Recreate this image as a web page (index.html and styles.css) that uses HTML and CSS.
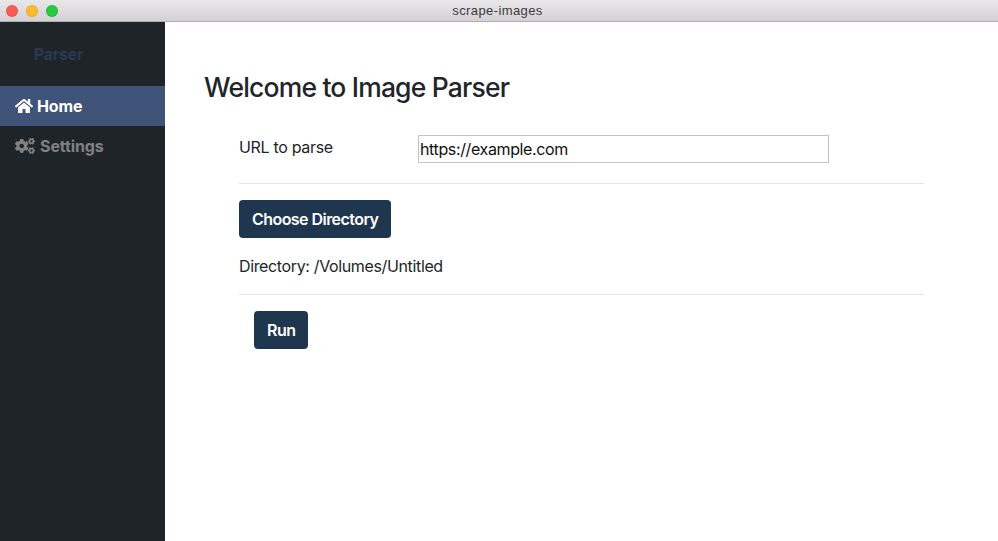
FILE: index.html
```html
<!DOCTYPE html>
<html lang="en">
<head>
<meta charset="utf-8">
<title>scrape-images</title>
<link rel="stylesheet" href="styles.css">
</head>
<body>
<div class="window">
  <header class="titlebar">
    <div class="lights">
      <span class="light light-close"></span>
      <span class="light light-min"></span>
      <span class="light light-max"></span>
    </div>
    <div class="title">scrape-images</div>
  </header>
  <div class="app">
    <aside class="sidebar">
      <div class="brand">Parser</div>
      <nav class="nav">
        <a class="nav-item active">
          <svg class="icon icon-home" viewBox="0 0 576 512"><path fill="currentColor" d="M280.37 148.26L96 300.11V464a16 16 0 0 0 16 16l112.06-.29a16 16 0 0 0 15.92-16V368a16 16 0 0 1 16-16h64a16 16 0 0 1 16 16v95.64a16 16 0 0 0 16 16.05L464 480a16 16 0 0 0 16-16V300L295.67 148.26a12.19 12.19 0 0 0-15.3 0zM571.6 251.47L488 182.56V44.05a12 12 0 0 0-12-12h-56a12 12 0 0 0-12 12v72.61L318.47 43a48 48 0 0 0-61 0L4.34 251.47a12 12 0 0 0-1.6 16.9l25.5 31A12 12 0 0 0 45.15 301l235.22-193.74a12.19 12.19 0 0 1 15.3 0L530.9 301a12 12 0 0 0 16.9-1.6l25.5-31a12 12 0 0 0-1.7-16.93z"/></svg>
          <span>Home</span>
        </a>
        <a class="nav-item">
          <svg class="icon icon-cogs" viewBox="0 0 640 512"><path fill="currentColor" d="M512.1 191l-8.2 14.3c-3 5.3-9.4 7.5-15.1 5.4-11.8-4.4-22.6-10.7-32.1-18.6-4.6-3.8-5.8-10.5-2.8-15.7l8.2-14.3c-6.9-8-12.3-17.3-15.9-27.4h-16.5c-6 0-11.2-4.3-12.2-10.3-2-12-2.1-24.6 0-37.1 1-6 6.2-10.4 12.2-10.4h16.5c3.6-10.1 9-19.4 15.9-27.4l-8.2-14.3c-3-5.2-1.9-11.9 2.8-15.7 9.5-7.9 20.4-14.2 32.1-18.6 5.7-2.1 12.1.1 15.1 5.4l8.2 14.3c10.5-1.9 21.2-1.9 31.7 0L552 6.3c3-5.3 9.4-7.5 15.1-5.4 11.8 4.4 22.6 10.7 32.1 18.6 4.6 3.8 5.8 10.5 2.8 15.7l-8.2 14.3c6.9 8 12.3 17.3 15.9 27.4h16.5c6 0 11.2 4.3 12.2 10.3 2 12 2.1 24.6 0 37.1-1 6-6.2 10.4-12.2 10.4h-16.5c-3.6 10.1-9 19.4-15.9 27.4l8.2 14.3c3 5.2 1.9 11.9-2.8 15.7-9.5 7.9-20.4 14.2-32.1 18.6-5.7 2.1-12.1-.1-15.1-5.4l-8.2-14.3c-10.4 1.9-21.2 1.9-31.7 0zm-10.5-58.8c38.5 29.6 82.4-14.3 52.8-52.8-38.5-29.7-82.4 14.3-52.8 52.8zM386.3 286.1l33.7 16.8c10.1 5.8 14.5 18.1 10.5 29.1-8.9 24.2-26.4 46.4-42.6 65.8-7.4 8.9-20.2 11.1-30.3 5.3l-29.1-16.8c-16 13.7-34.6 24.6-54.9 31.7v33.6c0 11.6-8.3 21.6-19.7 23.6-24.6 4.2-50.4 4.4-75.9 0-11.5-2-20-11.9-20-23.6V418c-20.3-7.2-38.9-18-54.9-31.7L74 403c-10 5.8-22.9 3.6-30.3-5.3-16.2-19.4-33.3-41.6-42.2-65.7-4-10.9.4-23.2 10.5-29.1l33.3-16.8c-3.9-20.9-3.9-42.4 0-63.4L12 205.8c-10.1-5.8-14.6-18.1-10.5-29 8.9-24.2 26-46.4 42.2-65.8 7.4-8.9 20.2-11.1 30.3-5.3l29.1 16.8c16-13.7 34.6-24.6 54.9-31.7V57.1c0-11.5 8.2-21.5 19.6-23.5 24.6-4.2 50.5-4.4 76-.1 11.5 2 20 11.9 20 23.6v33.6c20.3 7.2 38.9 18 54.9 31.7l29.1-16.8c10-5.8 22.9-3.6 30.3 5.3 16.2 19.4 33.2 41.6 42.1 65.8 4 10.9.1 23.2-10 29.1l-33.7 16.8c3.9 21 3.9 42.5 0 63.5zm-117.6 21.1c59.2-77-28.7-164.9-105.7-105.7-59.2 77 28.7 164.9 105.7 105.7zm243.4 182.7l-8.2 14.3c-3 5.3-9.4 7.5-15.1 5.4-11.8-4.4-22.6-10.7-32.1-18.6-4.6-3.8-5.8-10.5-2.8-15.7l8.2-14.3c-6.9-8-12.3-17.3-15.9-27.4h-16.5c-6 0-11.2-4.3-12.2-10.3-2-12-2.1-24.6 0-37.1 1-6 6.2-10.4 12.2-10.4h16.5c3.6-10.1 9-19.4 15.9-27.4l-8.2-14.3c-3-5.2-1.9-11.9 2.8-15.7 9.5-7.9 20.4-14.2 32.1-18.6 5.7-2.1 12.1.1 15.1 5.4l8.2 14.3c10.5-1.9 21.2-1.9 31.7 0l8.2-14.3c3-5.3 9.4-7.5 15.1-5.4 11.8 4.4 22.6 10.7 32.1 18.6 4.6 3.8 5.8 10.5 2.8 15.7l-8.2 14.3c6.9 8 12.3 17.3 15.9 27.4h16.5c6 0 11.2 4.3 12.2 10.3 2 12 2.1 24.6 0 37.1-1 6-6.2 10.4-12.2 10.4h-16.5c-3.6 10.1-9 19.4-15.9 27.4l8.2 14.3c3 5.2 1.9 11.9-2.8 15.7-9.5 7.9-20.4 14.2-32.1 18.6-5.7 2.1-12.1-.1-15.1-5.4l-8.2-14.3c-10.4 1.9-21.2 1.9-31.7 0zM501.6 431c38.5 29.6 82.4-14.3 52.8-52.8-38.5-29.6-82.4 14.3-52.8 52.8z"/></svg>
          <span>Settings</span>
        </a>
      </nav>
    </aside>
    <main class="content">
      <h1 class="heading">Welcome to Image Parser</h1>
      <section class="form">
        <div class="field">
          <label class="field-label" for="url">URL to parse</label>
          <input class="field-input" id="url" type="text" value="https://example.com">
        </div>
        <hr class="rule rule-first">
        <button class="btn" type="button">Choose Directory</button>
        <p class="directory">Directory: /Volumes/Untitled</p>
        <hr class="rule rule-second">
        <button class="btn btn-run" type="button">Run</button>
      </section>
    </main>
  </div>
</div>
</body>
</html>
```
FILE: styles.css
```css
* { box-sizing: border-box; }
html, body { margin: 0; height: 100%; }
body {
  font-family: Inter, "Liberation Sans", sans-serif;
  color: #212529;
  background: #fff;
  overflow: hidden;
}
.window { display: flex; flex-direction: column; height: 541px; width: 998px; }
.titlebar {
  flex: none;
  height: 22px;
  display: grid;
  grid-template-columns: 1fr auto 1fr;
  align-items: center;
  background: linear-gradient(#e9e7e9, #d3d1d3);
  border-bottom: 1px solid #b1afb1;
}
.lights { display: flex; gap: 8px; padding-left: 6px; }
.light { width: 12px; height: 12px; border-radius: 50%; border: 1px solid rgba(0,0,0,.08); }
.light-close { background: #fc5b57; }
.light-min { background: #fdbc2e; }
.light-max { background: #27c93f; }
.title {
  grid-column: 2;
  padding-right: 3px;
  font-family: "Liberation Sans", sans-serif;
  font-size: 13px;
  letter-spacing: .4px;
  color: #3c3a3c;
  line-height: 21px;
}
.app { flex: 1; display: flex; min-height: 0; }
.sidebar { flex: none; width: 165px; background: #1f2429; }
.brand {
  height: 64px;
  padding: 23px 0 0 34px;
  font-size: 15.5px;
  font-weight: 700;
  line-height: 19px;
  color: #2a3a50;
}
.nav { display: flex; flex-direction: column; }
.nav-item {
  height: 40px;
  display: flex;
  align-items: center;
  gap: 4px;
  padding-left: 15px;
  font-size: 16px;
  font-weight: 700;
  letter-spacing: -.1px;
  color: #7f8183;
}
.nav-item.active { background: #3f5478; color: #fff; }
.icon { flex: none; height: 16px; }
.icon-home { width: 18px; }
.icon-cogs { width: 20px; margin-right: 1px; }
.content { flex: 1; padding: 49px 74px 0 39px; min-width: 0; }
.heading {
  margin: 0;
  font-size: 26.5px;
  font-weight: 500;
  line-height: 32px;
  letter-spacing: -.82px;
  color: #212529;
}
.form { padding: 0 0 0 35px; margin-top: 32px; }
.field { display: flex; align-items: flex-start; height: 48px; }
.field-label {
  flex: none;
  width: 179px;
  font-size: 16px;
  line-height: 24px;
  letter-spacing: -.32px;
}
.field-input {
  width: 411px;
  height: 28px;
  margin: 0;
  padding: 0 1px;
  border: 1px solid #c4c4c4;
  border-radius: 0;
  font: 16px Inter, "Liberation Sans", sans-serif;
  letter-spacing: -.37px;
  color: #111;
  background: #fff;
  outline: 0;
}
.rule { border: 0; border-top: 1px solid #e3e3e4; margin: 0; }
.btn {
  display: block;
  height: 38px;
  padding: 0 13px;
  border: 0;
  border-radius: 4px;
  background: #1f364f;
  color: #fff;
  font: 600 16px/38px Inter, "Liberation Sans", sans-serif;
  letter-spacing: -.55px;
}
.rule-first { margin-bottom: 16px; }
.directory { margin: 16px 0 16px; font-size: 16px; line-height: 24px; letter-spacing: -.36px; }
.rule-second { margin-bottom: 16px; }
.btn-run { margin-left: 15px; }
```
